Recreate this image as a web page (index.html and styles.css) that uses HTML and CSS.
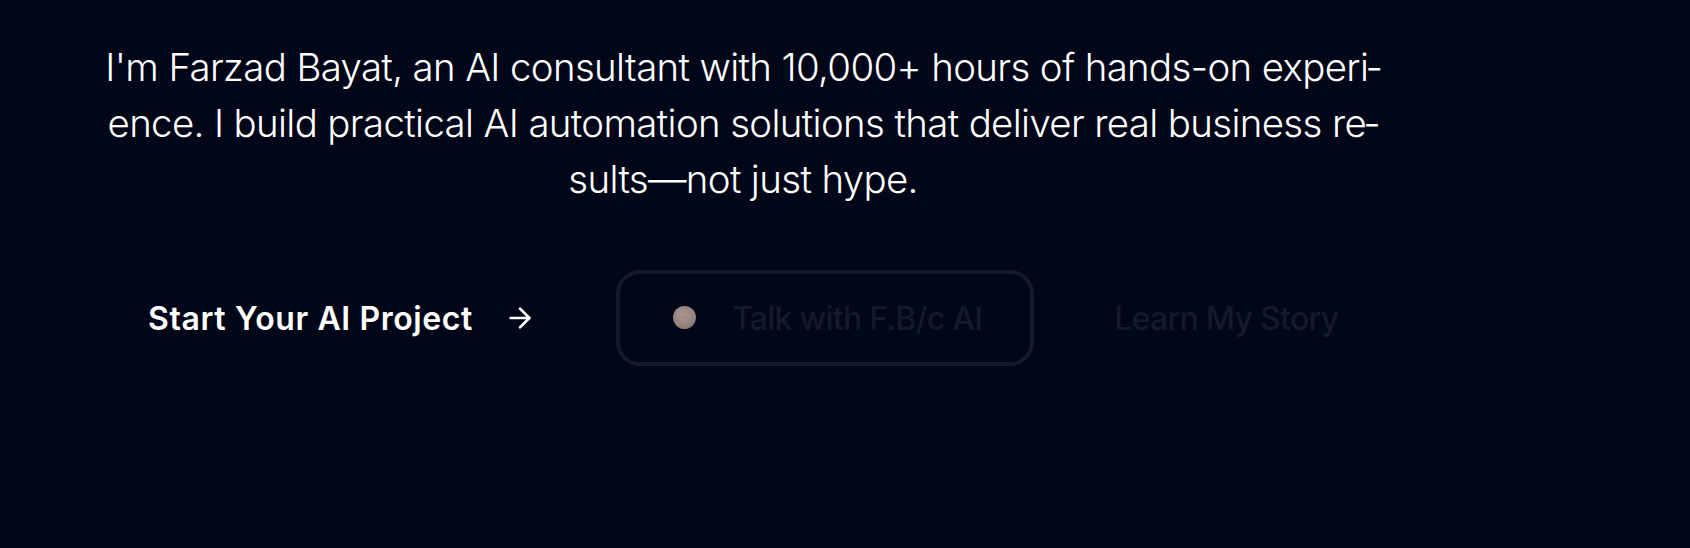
FILE: index.html
```html
<!DOCTYPE html>
<html lang="en">
<head>
  <meta charset="UTF-8">
  <title>Farzad Bayat</title>
  <link rel="stylesheet" href="styles.css">
</head>
<body>

<section class="hero">
  <p class="intro">I'm Farzad Bayat, an AI consultant with 10,000+ hours of hands-on experi&shy;ence. I build practical AI automation solutions that deliver real business re&shy;sults—not just hype.</p>

  <div class="actions">
    <a class="btn btn-primary" href="#">
      Start Your AI Project
      <svg class="arrow" width="32" height="32" viewBox="0 0 24 24" fill="none" stroke="currentColor" stroke-width="2" stroke-linecap="round" stroke-linejoin="round">
        <path d="M5 12h14"/>
        <path d="M12 5l7 7-7 7"/>
      </svg>
    </a>
    <a class="btn btn-outline" href="#">
      <span class="orb"></span>
      Talk with F.B/c AI
    </a>
    <a class="btn btn-ghost" href="#">Learn My Story</a>
  </div>
</section>

</body>
</html>
```

FILE: styles.css
```css
body {
  font-family: Inter, sans-serif;
  background-color: #010619;
  margin: 0;
  height: 548px;
  overflow: hidden;
}
.hero {
  width: 1294px;
  margin-left: 96px;
  padding-top: 39px;
}
.intro {
  margin: 0;
  font-size: 38.4px;
  font-weight: 300;
  letter-spacing: -0.63px;
  line-height: 56px;
  color: #fff;
  text-align: center;
  hyphens: manual;
}
.actions {
  display: flex;
  align-items: center;
  gap: 40px;
  margin-top: 63px;
  padding-left: 6px;
}
.btn {
  display: flex;
  align-items: center;
  height: 96px;
  box-sizing: border-box;
  font-size: 32px;
  font-weight: 500;
  letter-spacing: -0.72px;
  text-decoration: none;
  white-space: nowrap;
}
.btn-primary {
  padding: 0 40px 0 46px;
  gap: 31px;
  font-weight: 600;
  letter-spacing: 0.6px;
  color: #fff;
}
.btn-outline {
  padding: 0 48px 0 53px;
  gap: 36px;
  color: #151a2b;
  border: 4px solid #151a2b;
  border-radius: 24px;
}
.btn-ghost {
  padding: 0 40px;
  color: #151a2b;
}
.orb {
  width: 23px;
  height: 23px;
  margin-bottom: 2px;
  border-radius: 50%;
  background:
    radial-gradient(circle 2px at 50% 48%, #c4714c, transparent),
    radial-gradient(ellipse 4px 1.5px at 55% 10%, #b9765a, transparent),
    radial-gradient(ellipse 5px 1.5px at 45% 92%, #a8745e, transparent),
    radial-gradient(circle at 45% 40%, #ad9a95, #92807d 60%, #5e5050 100%);
}
```
